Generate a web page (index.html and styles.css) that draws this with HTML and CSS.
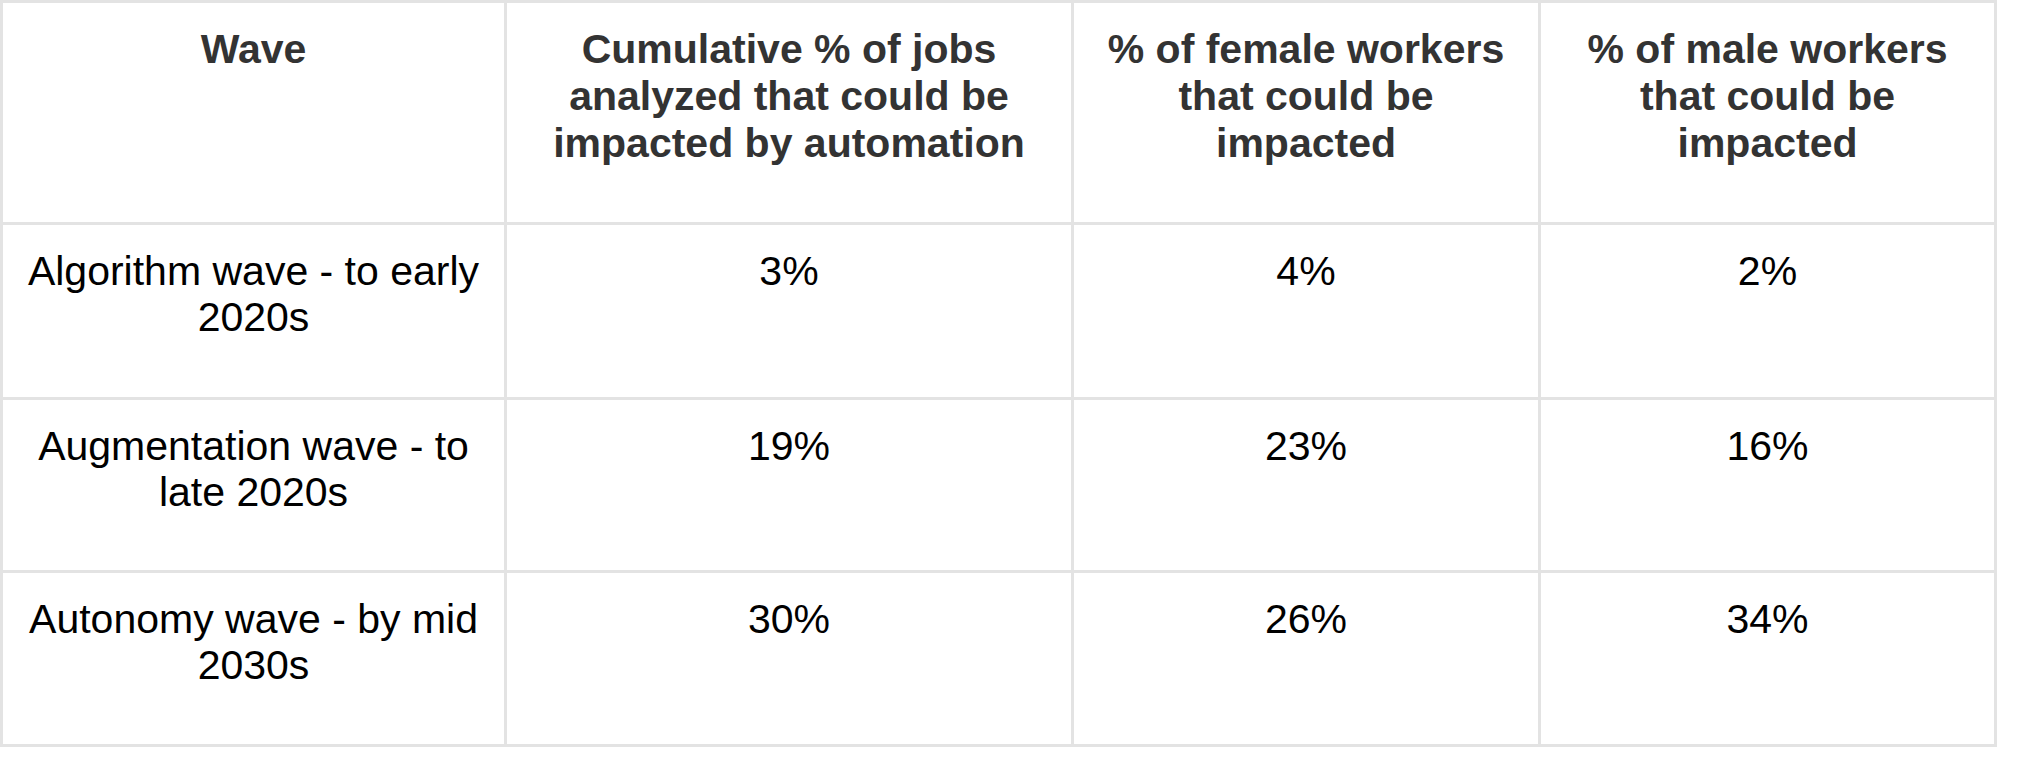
FILE: index.html
```html
<!DOCTYPE html>
<html lang="en">
<head>
<meta charset="utf-8">
<title>Automation waves</title>
<link rel="stylesheet" href="styles.css">
</head>
<body>
<div class="table">
  <div class="cell head">Wave</div>
  <div class="cell head">Cumulative % of jobs analyzed that could be impacted by automation</div>
  <div class="cell head">% of female workers that could be impacted</div>
  <div class="cell head">% of male workers that could be impacted</div>

  <div class="cell">Algorithm wave - to early 2020s</div>
  <div class="cell">3%</div>
  <div class="cell">4%</div>
  <div class="cell">2%</div>

  <div class="cell">Augmentation wave - to late 2020s</div>
  <div class="cell">19%</div>
  <div class="cell">23%</div>
  <div class="cell">16%</div>

  <div class="cell">Autonomy wave - by mid 2030s</div>
  <div class="cell">30%</div>
  <div class="cell">26%</div>
  <div class="cell">34%</div>
</div>
</body>
</html>
```

FILE: styles.css
```css
html, body {
  margin: 0;
  padding: 0;
  background: #ffffff;
}

.table {
  display: grid;
  grid-template-columns: 501px 564px 464px 453px;
  grid-template-rows: 219px 172px 170px 171px;
  gap: 3px;
  padding: 3px;
  width: max-content;
  background: #e3e3e3;
  font-family: "Liberation Sans", Arial, sans-serif;
  font-size: 41px;
}

.cell {
  background: #ffffff;
  color: #000000;
  text-align: center;
  line-height: 46px;
  padding: 23px 15px 0;
}

.cell.head {
  font-weight: bold;
  color: #333333;
  line-height: 47px;
  padding-top: 23px;
}
```
